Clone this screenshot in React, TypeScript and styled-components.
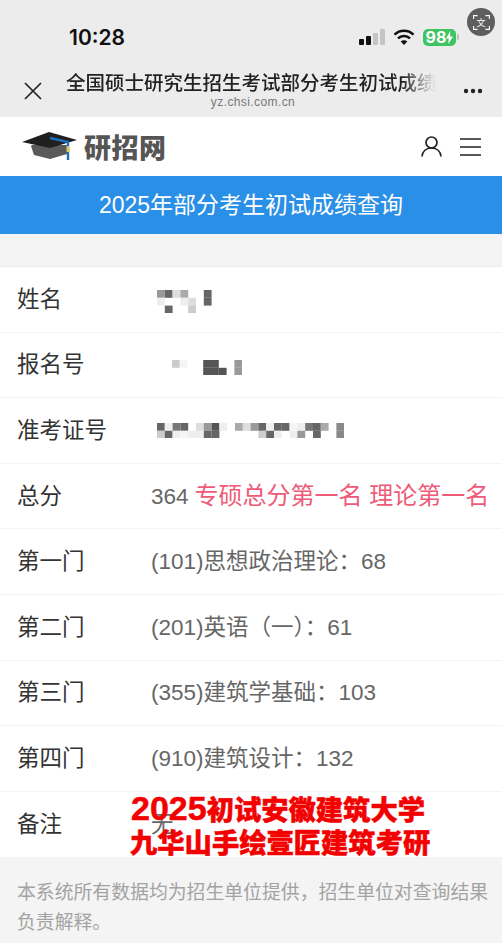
import React from "react";
import styled, { createGlobalStyle } from "styled-components";

const SANS = `"Liberation Sans", "Noto Sans CJK SC", sans-serif`;

const GlobalStyle = createGlobalStyle`
  html, body {
    margin: 0;
    padding: 0;
    background: #f4f4f4;
    font-family: ${SANS};
  }
`;

const Page = styled.div`
  position: relative;
  width: 502px;
  height: 943px;
  overflow: hidden;
  background: #f4f4f4;
`;

const TopBar = styled.div`
  height: 117px;
  background: #ececec;
`;

const StatusRow = styled.div`
  display: flex;
  align-items: center;
  height: 74px;
  padding: 0 46px 0 69px;
`;

const Clock = styled.span`
  flex: 1;
  font-family: Inter, sans-serif;
  font-size: 21px;
  font-weight: 600;
  color: #111;
`;

const StatusIcons = styled.div`
  display: flex;
  align-items: center;
  gap: 8px;
`;

const Battery = styled.div`
  position: relative;
  display: flex;
  align-items: center;
  justify-content: center;
  width: 33px;
  height: 17px;
  border-radius: 5px;
  background: #3fc463;
  color: #fff;
  font-family: Inter, sans-serif;
  font-size: 16px;
  font-weight: 700;
  &::after {
    content: "";
    position: absolute;
    right: -3px;
    top: 5px;
    width: 2px;
    height: 6px;
    border-radius: 0 2px 2px 0;
    background: #bdbdbd;
  }
`;

const TranslateBadge = styled.div`
  position: absolute;
  top: 8px;
  left: 467px;
  width: 28px;
  height: 28px;
  border-radius: 50%;
  background: #5e5e5e;
  display: flex;
  align-items: center;
  justify-content: center;
`;

const TranslateGlyph = styled.span`
  position: absolute;
  inset: 0;
  display: flex;
  align-items: center;
  justify-content: center;
  font-family: "Noto Sans CJK SC", sans-serif;
  font-size: 9px;
  color: #fff;
`;

const NavRow = styled.div`
  display: flex;
  align-items: flex-start;
  height: 43px;
  padding-left: 24px;
`;

const CloseButton = styled.svg`
  width: 18px;
  height: 18px;
  margin-top: 8px;
  flex: none;
`;

const TitleBlock = styled.div`
  width: 374px;
  margin-left: 24px;
  display: flex;
  flex-direction: column;
  align-items: center;
  margin-top: -5px;
`;

const TitleText = styled.div`
  width: 100%;
  height: 28px;
  line-height: 28px;
  overflow: hidden;
  white-space: nowrap;
  font-size: 19.5px;
  font-weight: 500;
  color: #222;
  -webkit-mask-image: linear-gradient(to right, #000 90%, rgba(0, 0, 0, 0.06) 98%);
  mask-image: linear-gradient(to right, #000 90%, rgba(0, 0, 0, 0.06) 98%);
`;

const UrlText = styled.div`
  margin-top: -2px;
  font-size: 12px;
  line-height: 14px;
  letter-spacing: 0.4px;
  color: #777;
`;

const MoreDots = styled.svg`
  width: 20px;
  height: 6px;
  margin: 14px 0 0 23px;
  flex: none;
`;

const SiteHeader = styled.header`
  display: flex;
  align-items: center;
  height: 59px;
  padding: 0 21px 0 22px;
  background: #fff;
`;

const SiteName = styled.span`
  flex: 1;
  margin-left: 7px;
  font-family: "Noto Sans CJK SC", sans-serif;
  font-size: 27px;
  font-weight: 900;
  letter-spacing: 0.5px;
  color: #555;
`;

const HeaderIcons = styled.div`
  display: flex;
  align-items: center;
  gap: 18px;
`;

const Banner = styled.div`
  height: 58px;
  line-height: 58px;
  text-align: center;
  font-size: 23px;
  color: #fff;
  background: #2a8fe6;
`;

const Spacer = styled.div`
  height: 33px;
  background: #f4f4f4;
  border-bottom: 1px solid #ececec;
  box-sizing: border-box;
`;

const Table = styled.div`
  display: flex;
  flex-direction: column;
  background: #fff;
`;

const Row = styled.div`
  position: relative;
  display: flex;
  align-items: center;
  height: 65.6px;
  padding-bottom: 5px;
  box-sizing: border-box;
  border-bottom: 1px solid #f3f3f3;
  &:last-child {
    border-bottom: 0;
  }
`;

const Label = styled.div`
  width: 134px;
  padding-left: 17px;
  flex: none;
  font-size: 22.5px;
  color: #333;
`;

const Value = styled.div`
  font-size: 22.5px;
  color: #666;
  white-space: nowrap;
`;

const Highlight = styled.span`
  margin-left: 6px;
  font-size: 24px;
  color: #ef5a78;
`;

const MosaicSvg = styled.svg<{ $indent: number; $drop: number }>`
  display: block;
  margin-left: ${(p) => p.$indent}px;
  margin-top: ${(p) => p.$drop}px;
`;

const Stamp = styled.div`
  position: absolute;
  left: 130px;
  top: 0;
  font-family: "Noto Sans CJK SC", sans-serif;
  font-size: 27.3px;
  line-height: 33px;
  font-weight: 900;
  white-space: nowrap;
  color: #f30000;
  -webkit-text-stroke: 0.5px #f30000;
`;

const StampDigits = styled.span`
  font-family: "Liberation Sans", sans-serif;
  font-size: 34px;
  font-weight: 700;
  margin-left: 1px;
`;

const Footer = styled.footer`
  padding: 21px 10px 0 17px;
  font-size: 18.85px;
  line-height: 30px;
  color: #a3a3a3;
`;

const CELL = 7.8;

// mosaic cells are grey levels, "" leaves a cell empty
const Mosaic = ({ rows, indent, drop }: { rows: string[][]; indent: number; drop: number }) => {
  const cols = Math.max(...rows.map((r) => r.length));
  return (
    <MosaicSvg $indent={indent} $drop={drop} width={cols * CELL} height={rows.length * CELL}>
      {rows.map((r, y) =>
        r.map((c, x) =>
          c ? (
            <rect key={`${x}-${y}`} x={x * CELL} y={y * CELL} width={CELL} height={CELL} fill={`#${c}`} />
          ) : null,
        ),
      )}
    </MosaicSvg>
  );
};

const nameCells = [
  ["999", "666", "ddd", "aaa", "", "", "666"],
  ["eee", "", "", "eee", "ddd", "", "666"],
  ["", "666", "", "", "ccc"],
];

const enrolCells = [
  ["ccc", "f5f5f5", "", "", "555", "555", "", "", "999"],
  ["", "", "", "", "555", "555", "555", "", "999"],
];

const examCells = [
  ["666", "eee", "777", "666", "", "ddd", "999", "555", "eee", "", "aaa", "ddd", "999", "666", "eee", "666", "666", "f5f5f5", "eee", "777", "666", "aaa", "", "888"],
  ["ccc", "666", "eee", "f5f5f5", "eee", "eee", "666", "666", "", "", "", "", "", "ccc", "666", "eee", "", "eee", "999", "", "666", "", "", "888"],
];

export default function App() {
  return (
    <Page>
      <GlobalStyle />
      <TopBar>
        <StatusRow>
          <Clock>10:28</Clock>
          <StatusIcons>
            <svg width="26" height="16" viewBox="0 0 26 16">
              <rect x="0" y="10" width="5" height="6" rx="1" fill="#111" />
              <rect x="7" y="7" width="5" height="9" rx="1" fill="#111" />
              <rect x="14" y="4" width="5" height="12" rx="1" fill="#c4c4c4" />
              <rect x="21" y="0" width="5" height="16" rx="1" fill="#c4c4c4" />
            </svg>
            <svg width="22" height="16" viewBox="0 0 22 16" fill="none" stroke="#111" strokeWidth="2.6">
              <path d="M1.5 5.6a13.6 13.6 0 0 1 19 0" />
              <path d="M5 9.4a8.6 8.6 0 0 1 12 0" />
              <path d="M11 16l-3.3-3.4a4.7 4.7 0 0 1 6.6 0z" fill="#111" stroke="none" />
            </svg>
            <Battery>
              98
              <svg width="7" height="13" viewBox="0 0 7 13">
                <path d="M4.4 0L0 7.4h2.8L2.2 13 7 5.4H4z" fill="#fff" />
              </svg>
            </Battery>
          </StatusIcons>
        </StatusRow>
        <NavRow>
          <CloseButton viewBox="0 0 18 18" fill="none" stroke="#222" strokeWidth="1.7">
            <path d="M1 1l16 16M17 1L1 17" />
          </CloseButton>
          <TitleBlock>
            <TitleText>全国硕士研究生招生考试部分考生初试成绩</TitleText>
            <UrlText>yz.chsi.com.cn</UrlText>
          </TitleBlock>
          <MoreDots viewBox="0 0 20 6" fill="#222">
            <circle cx="3" cy="3" r="2.2" />
            <circle cx="10" cy="3" r="2.2" />
            <circle cx="17" cy="3" r="2.2" />
          </MoreDots>
        </NavRow>
      </TopBar>
      <TranslateBadge>
        <svg width="17" height="15" viewBox="0 0 17 15" fill="none" stroke="#fff" strokeWidth="1.1">
          <path d="M.6 4V.6h4M12.400 .6h4V4M16.400 11v3.400h-4M4.600 14.400h-4V11" />
        </svg>
        <TranslateGlyph>文</TranslateGlyph>
      </TranslateBadge>
      <SiteHeader>
        <svg width="55" height="29" viewBox="0 0 55 29">
          <path d="M9 14l1 -1h37l-2 9-17 5-16-4z" fill="#5a5a5a" />
          <path d="M0 10L27 0l28 8-27 8z" fill="#1f1f1f" />
          <path d="M28 6l18 4v18" fill="none" stroke="#1f6fb8" strokeWidth="2.4" />
          <rect x="44.500" y="14" width="3" height="6" fill="#d9c56a" />
        </svg>
        <SiteName>研招网</SiteName>
        <HeaderIcons>
          <svg width="21" height="21" viewBox="0 0 21 21" fill="none" stroke="#222" strokeWidth="1.7">
            <circle cx="10.500" cy="6.500" r="5.500" />
            <path d="M1 20.500c.5-5 4-8.500 9.500-8.500s9 3.500 9.500 8.500" />
          </svg>
          <svg width="21" height="18" viewBox="0 0 21 18" stroke="#222" strokeWidth="1.7">
            <path d="M0 1h21M0 9h21M0 17h21" />
          </svg>
        </HeaderIcons>
      </SiteHeader>
      <Banner>2025年部分考生初试成绩查询</Banner>
      <Spacer />
      <Table>
        <Row>
          <Label>姓名</Label>
          <Mosaic rows={nameCells} indent={6} drop={9} />
        </Row>
        <Row>
          <Label>报名号</Label>
          <Mosaic rows={enrolCells} indent={21} drop={10} />
        </Row>
        <Row>
          <Label>准考证号</Label>
          <Mosaic rows={examCells} indent={6} drop={5} />
        </Row>
        <Row>
          <Label>总分</Label>
          <Value>
            364
            <Highlight>专硕总分第一名 理论第一名</Highlight>
          </Value>
        </Row>
        <Row>
          <Label>第一门</Label>
          <Value>(101)思想政治理论：68</Value>
        </Row>
        <Row>
          <Label>第二门</Label>
          <Value>(201)英语（一）：61</Value>
        </Row>
        <Row>
          <Label>第三门</Label>
          <Value>(355)建筑学基础：103</Value>
        </Row>
        <Row>
          <Label>第四门</Label>
          <Value>(910)建筑设计：132</Value>
        </Row>
        <Row>
          <Label>备注</Label>
          <Value>无</Value>
          <Stamp>
            <StampDigits>2025</StampDigits>初试安徽建筑大学
            <br />
            九华山手绘壹匠建筑考研
          </Stamp>
        </Row>
      </Table>
      <Footer>本系统所有数据均为招生单位提供，招生单位对查询结果负责解释。</Footer>
    </Page>
  );
}
